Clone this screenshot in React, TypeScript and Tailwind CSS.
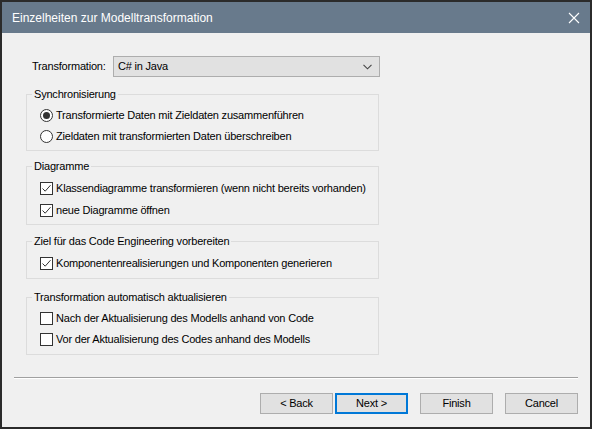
import React from 'react';

const font = { fontFamily: '"Liberation Sans", Arial, sans-serif' };

const CheckMark = () => (
  <svg width="11" height="11" viewBox="0 0 11 11" className="block">
    <path d="M1.5 5.5 L4.2 8.2 L9.5 2.2" fill="none" stroke="#333333" strokeWidth="1" />
  </svg>
);

const Checkbox: React.FC<{ checked?: boolean; label: string }> = ({ checked, label }) => (
  <div className="flex h-[20px] items-center">
    <span className="flex h-[13px] w-[13px] shrink-0 items-center justify-center border border-[#333333] bg-white">
      {checked && <CheckMark />}
    </span>
    <span className="ml-[3px] whitespace-nowrap">{label}</span>
  </div>
);

const Radio: React.FC<{ checked?: boolean; label: string }> = ({ checked, label }) => (
  <div className="flex h-[20px] items-center">
    <span className="flex h-[13px] w-[13px] shrink-0 items-center justify-center rounded-full border border-[#333333] bg-white">
      {checked && <span className="h-[7px] w-[7px] rounded-full bg-[#333333]" />}
    </span>
    <span className="ml-[3px] whitespace-nowrap">{label}</span>
  </div>
);

const Group: React.FC<{ title: string; className: string; gap: string; children: React.ReactNode }> = ({
  title,
  className,
  gap,
  children,
}) => (
  <fieldset className={`w-[353px] border border-[#dcdcdc] ${className}`}>
    <legend className="ml-[5px] px-[2px] leading-[16px]">{title}</legend>
    <div className={`flex flex-col pl-[13px] ${gap}`}>{children}</div>
  </fieldset>
);

const Button: React.FC<{ label: string; primary?: boolean; className?: string }> = ({
  label,
  primary,
  className = '',
}) => (
  <button
    className={`flex h-[21px] w-[73px] shrink-0 items-center justify-center bg-[#e1e1e1] ${
      primary ? 'border-2 border-[#0078d7]' : 'border border-[#adadad]'
    } ${className}`}
  >
    {label}
  </button>
);

export default function App() {
  return (
    <div
      style={font}
      className="flex h-[429px] w-[592px] flex-col border-2 border-[#2b2b2b] bg-[#f0f0f0] text-[11px] tracking-[-0.2px] text-black"
    >
      {/* Title bar */}
      <div className="flex h-[31px] shrink-0 items-center justify-between bg-[#687a8c] pl-[10px] pr-[10px] tracking-normal text-white">
        <span className="text-[12px]">Einzelheiten zur Modelltransformation</span>
        <svg width="12" height="12" viewBox="0 0 12 12">
          <path d="M1 1 L11 11 M11 1 L1 11" stroke="white" strokeWidth="1.1" />
        </svg>
      </div>

      {/* Body */}
      <div className="flex flex-1 flex-col pl-[24px]">
        <div className="mt-[23px] flex items-center">
          <span className="ml-[6px] w-[81px] shrink-0">Transformation:</span>
          <div className="flex h-[21px] w-[267px] items-center justify-between border border-[#adadad] bg-[#e1e1e1] pl-[4px] pr-[7px]">
            <span>C# in Java</span>
            <svg width="9" height="6" viewBox="0 0 9 6">
              <path d="M0.5 0.8 L4.5 4.8 L8.5 0.8" fill="none" stroke="#444" strokeWidth="1.1" />
            </svg>
          </div>
        </div>

        <Group title="Synchronisierung" className="mt-[9px] pt-[3px] pb-[4px]" gap="gap-[1px]">
          <Radio checked label="Transformierte Daten mit Zieldaten zusammenführen" />
          <Radio label="Zieldaten mit transformierten Daten überschreiben" />
        </Group>

        <Group title="Diagramme" className="mt-[7px] pt-[4px] pb-[4px]" gap="gap-[2px]">
          <Checkbox checked label="Klassendiagramme transformieren (wenn nicht bereits vorhanden)" />
          <Checkbox checked label="neue Diagramme öffnen" />
        </Group>

        <Group title="Ziel für das Code Engineering vorbereiten" className="mt-[8px] pt-[4px] pb-[5px]" gap="gap-[1px]">
          <Checkbox checked label="Komponentenrealisierungen und Komponenten generieren" />
        </Group>

        <Group title="Transformation automatisch aktualisieren" className="mt-[10px] pt-[3px] pb-[5px]" gap="gap-[1px]">
          <Checkbox label="Nach der Aktualisierung des Modells anhand von Code" />
          <Checkbox label="Vor der Aktualisierung des Codes anhand des Modells" />
        </Group>
      </div>

      {/* Footer */}
      <div className="shrink-0 px-[12px]">
        <div className="h-[2px] border-t border-[#a0a0a0] border-b border-b-white" />
      </div>
      <div className="flex h-[48px] shrink-0 items-start justify-end pr-[12px] pt-[14px]">
        <Button label="< Back" />
        <Button label="Next >" primary className="ml-[2px]" />
        <Button label="Finish" className="ml-[12px]" />
        <Button label="Cancel" className="ml-[12px]" />
      </div>
    </div>
  );
}
